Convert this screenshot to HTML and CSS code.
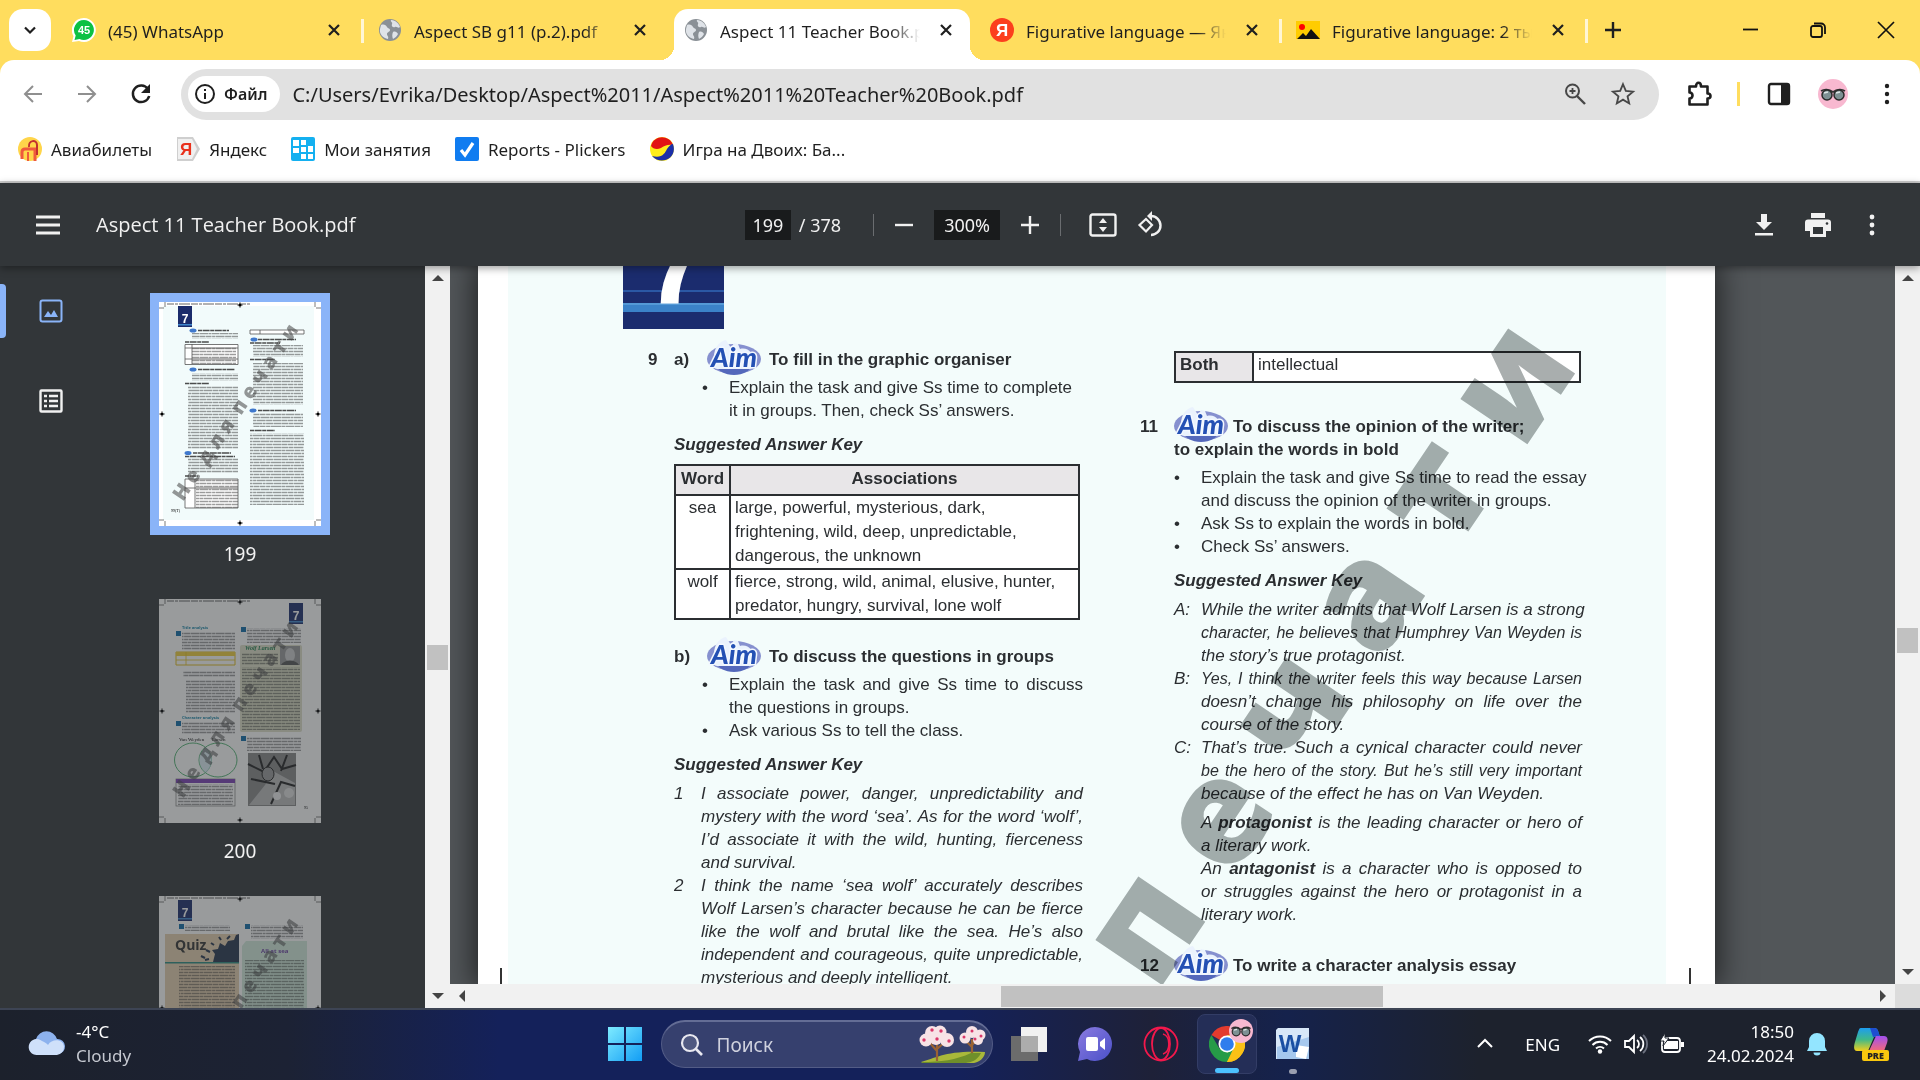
FILE: index.html
```html
<!DOCTYPE html>
<html lang="ru">
<head>
    <meta charset="UTF-8">
    <meta name="viewport" content="width=device-width, initial-scale=1.0">
    <title>Aspect 11 Teacher Book.pdf</title>
    <link rel="stylesheet" href="styles.css">
</head>
<body>
    <!-- Shared shapes -->
    <svg class="defs" width="0" height="0" aria-hidden="true">
        <defs>
            <symbol id="close" viewBox="0 0 24 24"><path d="M7 7l10 10M17 7L7 17" stroke="#1f1f1f" stroke-width="2.2"/></symbol>
            <symbol id="globe" viewBox="0 0 24 24">
                <circle cx="12" cy="12" r="11" fill="#8a9096"/>
                <path d="M3 7c3-1 5 0 6 2s3 1 3 3-3 2-3 4 2 2 1 5c-5-1-9-5-8-10zM13 2c5 0 8 4 9 7-2 2-3-1-5 0s-4-1-3-3-2-2-1-4zM15 14c2-1 4 0 5 2-1 2-3 4-5 5-1-2-1-5 0-7z" fill="#dfe3e8"/>
            </symbol>
            <symbol id="aim" viewBox="0 0 54 36">
                <ellipse cx="27" cy="20" rx="27" ry="15" fill="#8690cf"/>
                <ellipse cx="27" cy="26" rx="17" ry="10" fill="#5468bb"/>
                <path d="M7 18c0-10 6-16 12-17l5 8 3-5 4 1 2 5c8-2 14 4 14 14 0 4-2 6-6 6H10c-5-1-6-6-3-12z" fill="#eaf2fd"/>
                <text x="27" y="28" text-anchor="middle" font-family="Lato, sans-serif" font-weight="900" font-size="27" font-style="italic" fill="#2450b4" stroke="#f3f8ff" stroke-width="3" stroke-linejoin="round" paint-order="stroke">Aim</text>
            </symbol>
            <pattern id="lines" width="41" height="12" patternUnits="userSpaceOnUse">
                <path d="M0 1.5h6.500m.5 0h4.500m.5 0h9m.6 0h3m.5 0h7m.5 0h8M0 4.5h3.500m.5 0h8m.5 0h5.500m.5 0h6m.6 0h4m.5 0h11M0 7.5h8m.5 0h3m.5 0h7m.5 0h9m.5 0h3m.5 0h8M0 10.5h5m.5 0h6m.6 0h3m.5 0h9m.5 0h6m.5 0h9" stroke="#222" stroke-opacity=".45" stroke-width="1.300"/>
            </pattern>
            <symbol id="marks" viewBox="0 0 162 224">
                <path d="M8 2h84" stroke="#222" stroke-width="1" stroke-dasharray="7 1 3 1 11 1" opacity=".7"/>
                <path d="M6 0v5M0 6h5M156 0v5M157 6h5M6 219v5M0 218h5M156 219v5M157 218h5M81 0v6M78 3h6M3 109v6M0 112h6M159 109v6M156 112h6M81 218v6M78 221h6" stroke="#444" stroke-width=".7"/>
                <circle cx="81" cy="3" r="1.6"/><circle cx="3" cy="112" r="1.6"/><circle cx="159" cy="112" r="1.6"/><circle cx="81" cy="221" r="1.6"/>
            </symbol>
            <symbol id="stamp" viewBox="0 0 162 224">
                <text transform="translate(24 200) rotate(-56)" font-family="Open Sans, sans-serif" font-weight="800" font-size="20" fill="#444" fill-opacity=".55" xml:space="preserve">Н е  д л я  п е ч а т и</text>
            </symbol>
            <symbol id="seven" viewBox="0 0 14 21">
                <rect width="14" height="21" fill="#1a2b6b"/><rect y="18" width="14" height="1.500" fill="#3f86cc"/>
                <text x="7" y="17" text-anchor="middle" font-family="Liberation Sans, sans-serif" font-weight="700" font-size="12" fill="#fff">7</text>
            </symbol>
            <symbol id="shades" viewBox="0 0 30 30">
                <circle cx="15" cy="15" r="15" fill="#f8b8d0"/>
                <path d="M3 12c3-2 8-2 12 1 4-3 9-3 12-1" fill="none" stroke="#333" stroke-width="1.6"/>
                <ellipse cx="9" cy="16" rx="5" ry="5" fill="#7d9093" stroke="#2a2a2a" stroke-width="1.5"/>
                <ellipse cx="21" cy="16" rx="5" ry="5" fill="#7d9093" stroke="#2a2a2a" stroke-width="1.5"/>
                <path d="M6 14l4-1M18 14l4-1" stroke="#dde6e6" stroke-width="1.5"/>
            </symbol>
        </defs>
    </svg>

    <header class="tabstrip">
        <button class="tab-search" aria-label="Поиск вкладок"><svg width="20" height="20" viewBox="0 0 20 20"><path d="M5 7.5l5 5 5-5" fill="none" stroke="#1f1f1f" stroke-width="2.2"/></svg></button>
        <div class="tab with-sep">
            <svg class="fav" viewBox="0 0 24 24"><path d="M12 0a12 12 0 1 1-5 23L0 24l1.500-6A12 12 0 0 1 12 0z" fill="#fff"/><path d="M12 2a10 10 0 1 1-4.500 19L2.500 22l1.200-4.500A10 10 0 0 1 12 2z" fill="#0cc143"/><text x="12" y="16" text-anchor="middle" font-family="Liberation Sans, sans-serif" font-weight="700" font-size="11" fill="#fff">45</text></svg>
            <button class="tab-name">(45) WhatsApp</button>
            <button class="tab-close" aria-label="Закрыть"><svg width="24" height="24"><use href="#close"/></svg></button>
        </div>
        <div class="tab">
            <svg class="fav"><use href="#globe"/></svg>
            <button class="tab-name">Aspect SB g11 (p.2).pdf</button>
            <button class="tab-close" aria-label="Закрыть"><svg width="24" height="24"><use href="#close"/></svg></button>
        </div>
        <div class="tab active">
            <svg class="fav"><use href="#globe"/></svg>
            <button class="tab-name">Aspect 11 Teacher Book.pdf</button>
            <button class="tab-close" aria-label="Закрыть"><svg width="24" height="24"><use href="#close"/></svg></button>
        </div>
        <div class="tab with-sep">
            <svg class="fav" viewBox="0 0 24 24"><circle cx="12" cy="12" r="12" fill="#fc3f1d"/><text x="12" y="18" text-anchor="middle" font-family="Liberation Sans, sans-serif" font-weight="700" font-size="17" fill="#fff">Я</text></svg>
            <button class="tab-name">Figurative language — Яндекс</button>
            <button class="tab-close" aria-label="Закрыть"><svg width="24" height="24"><use href="#close"/></svg></button>
        </div>
        <div class="tab with-sep">
            <svg class="fav" viewBox="0 0 24 24"><path d="M0 3h24v18H0z" fill="#fc0"/><circle cx="6" cy="9" r="3" fill="#f00"/><path d="M1 21l6-6 3 3 5-7 9 10z" fill="#111"/></svg>
            <button class="tab-name">Figurative language: 2 тыс</button>
            <button class="tab-close" aria-label="Закрыть"><svg width="24" height="24"><use href="#close"/></svg></button>
        </div>
        <button class="new-tab" aria-label="Новая вкладка"><svg width="20" height="20" viewBox="0 0 20 20"><path d="M10 2v16M2 10h16" stroke="#1f1f1f" stroke-width="2.400"/></svg></button>
        <div class="window-controls">
            <button aria-label="Свернуть"><svg width="20" height="20" viewBox="0 0 20 20"><path d="M3 9.500h15" stroke="#111" stroke-width="1.800"/></svg></button>
            <button aria-label="Восстановить"><svg width="20" height="20" viewBox="0 0 20 20"><rect x="3" y="6" width="11" height="11" rx="2" fill="none" stroke="#111" stroke-width="1.800"/><path d="M6 3.500h7a4 4 0 0 1 4 4V14" fill="none" stroke="#111" stroke-width="1.800"/></svg></button>
            <button aria-label="Закрыть окно"><svg width="20" height="20" viewBox="0 0 20 20"><path d="M2 2l16 16M18 2L2 18" stroke="#111" stroke-width="1.700"/></svg></button>
        </div>
    </header>

    <nav class="browser-bar">
        <div class="toolbar">
            <button class="icon-btn" aria-label="Назад"><svg width="24" height="24" viewBox="0 0 24 24"><path d="M21 12H4M12 4l-8 8 8 8" fill="none" stroke="#8f8f8f" stroke-width="2"/></svg></button>
            <button class="icon-btn" aria-label="Вперёд"><svg width="24" height="24" viewBox="0 0 24 24"><path d="M3 12h17M12 4l8 8-8 8" fill="none" stroke="#8f8f8f" stroke-width="2"/></svg></button>
            <button class="icon-btn" aria-label="Обновить"><svg width="24" height="24" viewBox="0 0 24 24"><path d="M19 7a8.300 8.300 0 1 0 1.200 7" fill="none" stroke="#1f1f1f" stroke-width="2.500"/><path d="M21 2v9h-9z" fill="#1f1f1f"/></svg></button>
            <div class="omnibox">
                <button class="file-chip"><svg width="22" height="22" viewBox="0 0 22 22"><circle cx="11" cy="11" r="9" fill="none" stroke="#1f1f1f" stroke-width="2"/><path d="M11 10v6M11 6v2" stroke="#1f1f1f" stroke-width="2"/></svg>Файл</button>
                <input class="url" type="text" aria-label="Адрес" value="C:/Users/Evrika/Desktop/Aspect%2011/Aspect%2011%20Teacher%20Book.pdf">
                <button class="icon-btn" aria-label="Масштаб"><svg width="24" height="24" viewBox="0 0 24 24"><circle cx="9.500" cy="9" r="6.500" fill="none" stroke="#474747" stroke-width="2"/><path d="M14 14l8 8" stroke="#474747" stroke-width="2.400"/><path d="M9.500 6v6M6.500 9h6" stroke="#474747" stroke-width="1.800"/></svg></button>
                <button class="icon-btn" aria-label="В закладки"><svg width="26" height="26" viewBox="0 0 24 24"><path d="M12 3l2.600 6.200 6.700.6-5.100 4.400 1.500 6.500L12 17.200l-5.700 3.500 1.500-6.500-5.100-4.400 6.700-.6z" fill="none" stroke="#474747" stroke-width="1.700"/></svg></button>
            </div>
            <button class="icon-btn" aria-label="Расширения"><svg width="28" height="28" viewBox="0 0 28 28"><path d="M4.500 6.500h6.500c0-5 5-5 5 0h6.500v7c4 0 4 5 0 5v6h-18v-6c4 0 4-6 0-6z" fill="none" stroke="#1f1f1f" stroke-width="2.600" stroke-linejoin="round"/></svg></button>
            <span class="bar-sep"></span>
            <button class="icon-btn" aria-label="Боковая панель"><svg width="24" height="24" viewBox="0 0 24 24"><rect x="2" y="2" width="20" height="20" rx="2" fill="none" stroke="#1f1f1f" stroke-width="2.400"/><path d="M14 2h8v20h-8z" fill="#1f1f1f"/></svg></button>
            <button class="icon-btn" aria-label="Профиль"><svg width="30" height="30"><use href="#shades"/></svg></button>
            <button class="icon-btn" aria-label="Меню"><svg width="24" height="24" viewBox="0 0 24 24"><g fill="#1f1f1f"><circle cx="12" cy="4" r="2.200"/><circle cx="12" cy="12" r="2.200"/><circle cx="12" cy="20" r="2.200"/></g></svg></button>
        </div>
        <div class="bookmarks">
            <a href="#"><svg class="fav" viewBox="0 0 24 24"><circle cx="12" cy="12" r="12" fill="#ffd54a"/><path d="M4 22v-7c0-2 1-3 3-3h10v12" fill="none" stroke="#ef5a3c" stroke-width="3"/><path d="M11 10c-1-7 8-8 8-2v10" fill="none" stroke="#c22f2f" stroke-width="2"/><path d="M10 15v9" stroke="#ef5a3c" stroke-width="2"/></svg>Авиабилеты</a>
            <a href="#"><svg class="fav" viewBox="0 0 24 24"><path d="M1 0h16l7 12-7 12H1z" fill="#cfcfcf"/><path d="M2 2h14l5 10-5 10H2z" fill="#f0f0f0"/><text x="10" y="18" text-anchor="middle" font-family="Liberation Sans, sans-serif" font-weight="700" font-size="17" fill="#e9311c">Я</text></svg>Яндекс</a>
            <a href="#"><svg class="fav" viewBox="0 0 24 24"><rect width="24" height="24" rx="2" fill="#14b0f0"/><path d="M2 3h6v6H2zM10 3h5v5h-5zM2 11h6v5H2zM10 10h5v5h-5zM17 9h5v6h-5zM10 17h5v5h-5zM17 17h5v5h-5z" fill="#fff"/></svg>Мои занятия</a>
            <a href="#"><svg class="fav" viewBox="0 0 24 24"><rect width="24" height="24" rx="2" fill="#107cf0"/><path d="M6 13l4 5 8-12" fill="none" stroke="#fff" stroke-width="3.200"/></svg>Reports - Plickers</a>
            <a href="#"><svg class="fav" viewBox="0 0 24 24"><circle cx="12" cy="12" r="12" fill="#ffee1c"/><path d="M1 9C4-3 20-2 23 8c-5-1-9 1-12 3-4 2-8 1-10-2z" fill="#e21414"/><path d="M23 7c5 14-12 22-21 12 10 3 13-3 15-7 2-3 4-5 6-5z" fill="#1b2fa8"/></svg>Игра на Двоих: Ба...</a>
        </div>
    </nav>

    <section class="pdf-toolbar">
        <div class="pdf-left">
            <button class="icon-btn" aria-label="Меню"><svg width="24" height="24" viewBox="0 0 24 24"><path d="M0 4h24M0 12h24M0 20h24" stroke="#f1f1f1" stroke-width="2.800"/></svg></button>
            <h1>Aspect 11 Teacher Book.pdf</h1>
        </div>
        <div class="pdf-center">
            <input class="page-no" type="text" aria-label="Номер страницы" value="199">
            <span class="page-count">/ 378</span>
            <span class="pdf-sep"></span>
            <button class="icon-btn" aria-label="Уменьшить"><svg width="24" height="24" viewBox="0 0 24 24"><path d="M3 12h18" stroke="#f1f1f1" stroke-width="2.400"/></svg></button>
            <input class="zoom-level" type="text" aria-label="Масштаб" value="300%">
            <button class="icon-btn" aria-label="Увеличить"><svg width="24" height="24" viewBox="0 0 24 24"><path d="M3 12h18M12 3v18" stroke="#f1f1f1" stroke-width="2.400"/></svg></button>
            <span class="pdf-sep second"></span>
            <button class="icon-btn" aria-label="По размеру страницы"><svg width="28" height="24" viewBox="0 0 28 24"><rect x="1.500" y="1.500" width="25" height="21" rx="2" fill="none" stroke="#f1f1f1" stroke-width="2.400"/><path d="M14 5l4 5h-8zM14 19l4-5h-8z" fill="#f1f1f1"/></svg></button>
            <button class="icon-btn rotate" aria-label="Повернуть"><svg width="28" height="28" viewBox="0 0 28 28"><path d="M9 8l6 6-6 6.500-6.500-6.500z" fill="none" stroke="#f1f1f1" stroke-width="2.200"/><path d="M14 5a9.500 9.500 0 1 1 0 19" fill="none" stroke="#f1f1f1" stroke-width="2.400"/><path d="M15 0v10l-5-5z" fill="#f1f1f1"/></svg></button>
        </div>
        <div class="pdf-right">
            <button class="icon-btn" aria-label="Скачать"><svg width="24" height="24" viewBox="0 0 24 24"><path d="M9 1h6v8h5l-8 8-8-8h5zM3 20h18v2.600H3z" fill="#f1f1f1"/></svg></button>
            <button class="icon-btn" aria-label="Печать"><svg width="26" height="24" viewBox="0 0 26 24"><path d="M6 0h14v5H6zM3 6.500h20a3 3 0 0 1 3 3V18h-5v6H5v-6H0V9.500a3 3 0 0 1 3-3z" fill="#f1f1f1"/><path d="M8 14h10v7H8z" fill="#323639"/><circle cx="22" cy="10.500" r="1.300" fill="#323639"/></svg></button>
            <button class="icon-btn" aria-label="Ещё"><svg width="24" height="24" viewBox="0 0 24 24"><g fill="#f1f1f1"><circle cx="12" cy="4" r="2.400"/><circle cx="12" cy="12" r="2.400"/><circle cx="12" cy="20" r="2.400"/></g></svg></button>
        </div>
    </section>

    <main class="viewer">
        <aside class="sidebar">
            <div class="side-modes">
                <button class="mode selected" aria-label="Миниатюры"><svg width="24" height="24" viewBox="0 0 24 24"><rect x="1.500" y="1.500" width="21" height="21" rx="2" fill="none" stroke="#8ab4f8" stroke-width="2"/><path d="M5 18l4-6 3 4 3-5 4 7z" fill="#8ab4f8"/></svg></button>
                <button class="mode" aria-label="Содержание"><svg width="24" height="24" viewBox="0 0 24 24"><rect x="1.500" y="1.500" width="21" height="21" rx="1" fill="none" stroke="#f1f1f1" stroke-width="2.400"/><path d="M5 7h3M5 12h3M5 17h3M10 7h9M10 12h9M10 17h9" stroke="#f1f1f1" stroke-width="2.400"/></svg></button>
            </div>
            <div class="thumbs">
                <figure class="thumb current">
                    <svg viewBox="0 0 162 224" role="img" aria-label="Страница 199">
                        <rect width="162" height="224" fill="#fff"/><rect x="4" y="4" width="151" height="214" fill="#f2fbfb"/>
                        <use href="#marks" width="162" height="224"/><use href="#seven" x="19" y="4" width="14" height="21"/>
                        <path d="M26 42.500h53v20H26zM26 177h53v29H26zM91 28h54v4H91z" fill="#fff"/>
                        <g fill="url(#lines)">
                            <rect x="33" y="31" width="46" height="6"/><rect x="33" y="45" width="44" height="17"/>
                            <rect x="33" y="71" width="46" height="8"/><rect x="29" y="84" width="50" height="63"/>
                            <rect x="29" y="156" width="50" height="15"/><rect x="37" y="177" width="42" height="29"/>
                            <rect x="94" y="43" width="50" height="12"/><rect x="94" y="61" width="50" height="42"/>
                            <rect x="94" y="111" width="50" height="14"/><rect x="91" y="131" width="54" height="72"/>
                        </g>
                        <path d="M26 42.500h53v20H26zM26 177h53v29H26zM91 28h54v4H91zM26 46h53M26 57h53M33 42v20M36 177v29M26 186h53M101 28v4" fill="none" stroke="#555" stroke-width=".8"/>
                        <g fill="#3f78cc"><ellipse cx="34" cy="28.500" rx="3.500" ry="2"/><ellipse cx="34" cy="67.500" rx="3.500" ry="2"/><ellipse cx="29" cy="151" rx="3.500" ry="2"/><ellipse cx="95" cy="37.500" rx="3.500" ry="2"/><ellipse cx="94" cy="108.500" rx="3.500" ry="2"/></g>
                        <path d="M39 28.500h31M39 67.500h37M34 151h38M26 154.500h50M99 37.500h38M91 41h30M99 108.500h38M26 40h24M26 81.500h24M91 57.500h25M91 128.500h25M26 174h13" stroke="#222" stroke-width="1.400" stroke-opacity=".8" stroke-dasharray="4 .6 7 .6"/>
                        <text x="12" y="210" font-family="Liberation Serif, serif" font-size="4">99(T)</text>
                        <use href="#stamp" width="162" height="224"/>
                    </svg>
                    <figcaption>199</figcaption>
                </figure>
                <figure class="thumb">
                    <svg viewBox="0 0 162 224" role="img" aria-label="Страница 200">
                        <rect width="162" height="224" fill="#fff"/>
                        <use href="#marks" width="162" height="224"/><use href="#seven" x="130" y="4" width="14" height="21"/>
                        <text x="23" y="30" font-family="Open Sans, sans-serif" font-size="4" font-weight="700" fill="#1a86a8">Title analysis</text>
                        <text x="23" y="120" font-family="Open Sans, sans-serif" font-size="4" font-weight="700" fill="#1a86a8">Character analysis</text>
                        <g fill="#0d6aa8"><path d="M17 32h5v5h-5zM82 28h5v5h-5zM17 122h5v5h-5zM82 137h5v5h-5z"/></g>
                        <g fill="url(#lines)"><rect x="23" y="33" width="53" height="18"/><rect x="24" y="72" width="52" height="6"/><rect x="27" y="81" width="49" height="33"/><rect x="23" y="123" width="53" height="12"/><rect x="88" y="29" width="54" height="15"/><rect x="88" y="138" width="54" height="14"/></g>
                        <path d="M17 53h59v13H17z" fill="#fff" stroke="#e0bd1e"/><path d="M17 53h59v4H17z" fill="#f2cf3c"/><path d="M17 61h59M27 53v13" stroke="#e0bd1e" stroke-width=".8"/>
                        <rect x="81" y="46" width="62" height="87" rx="2" fill="#dfe0c8"/>
                        <rect x="83" y="54" width="36" height="12" fill="url(#lines)"/><rect x="83" y="68" width="58" height="63" fill="url(#lines)"/>
                        <text x="86" y="51" font-family="Liberation Serif, serif" font-size="6" font-style="italic" font-weight="700" fill="#1d7a4d">Wolf Larsen</text>
                        <rect x="121" y="47" width="20" height="19" fill="#999"/><ellipse cx="131" cy="56" rx="5" ry="7" fill="#ccc"/><path d="M122 66c3-6 15-6 18 0z" fill="#555"/>
                        <text x="20" y="142" font-family="Liberation Serif, serif" font-size="5">Van Weyden</text><text x="53" y="142" font-family="Liberation Serif, serif" font-size="5">Larsen</text>
                        <g fill="none" stroke="#28a050" stroke-width=".8"><ellipse cx="34" cy="161" rx="18.500" ry="17"/><ellipse cx="59" cy="161" rx="19" ry="17"/></g>
                        <path d="M47 148c8 8 8 18 0 26-9-8-9-18 0-26z" fill="#cfe6f0" fill-opacity=".7"/>
                        <rect x="17" y="180" width="59" height="27" fill="#fff" stroke="#777" stroke-width=".7"/><rect x="19" y="185" width="55" height="21" fill="url(#lines)"/><rect x="17" y="180" width="59" height="4" fill="#7a3fb5"/>
                        <rect x="89" y="154" width="48" height="53" fill="#888"/><path d="M90 206l16-20 8-14 22 12v22z" fill="#bbb"/><path d="M89 165l16 8 10-15 8 12 14-4M92 180l24 5M100 156l4 14M112 205l10-22 14 4M128 156l-6 16" stroke="#222" stroke-width="2" fill="none"/><ellipse cx="109" cy="175" rx="6" ry="7" fill="#999" stroke="#222"/><circle cx="118" cy="197" r="4" fill="#eee"/><circle cx="130" cy="194" r="5" fill="#ddd"/>
                        <text x="145" y="210" font-family="Liberation Serif, serif" font-size="4">95</text>
                        <use href="#stamp" width="162" height="224"/>
                    </svg>
                    <figcaption>200</figcaption>
                </figure>
                <figure class="thumb">
                    <svg viewBox="0 0 162 224" role="img" aria-label="Страница 201">
                        <rect width="162" height="224" fill="#fff"/>
                        <use href="#marks" width="162" height="224"/><use href="#seven" x="19" y="4" width="14" height="21"/>
                        <path d="M20 28h5v5h-5zM86 28h5v5h-5z" fill="#0d6aa8"/>
                        <g fill="url(#lines)"><rect x="26" y="29" width="45" height="6"/><rect x="92" y="29" width="52" height="14"/></g>
                        <rect x="6" y="38" width="74" height="180" fill="#e6cfb0"/><rect x="6" y="66" width="74" height="1.500" fill="#2a8a80"/>
                        <path d="M54 66l2-8-3-4 6-1 2-6 5 3 3-5 6-1 2-5 3-1v28z" fill="#26354d"/><path d="M42 60l4 2M47 54l4 2M52 47l3 2M60 41l2 3M68 43l3-3M46 64l4-1" stroke="#26354d" stroke-width="2"/>
                        <text x="16" y="54" font-family="Open Sans, sans-serif" font-size="14" font-weight="700" fill="#333">Quiz</text>
                        <rect x="20" y="70" width="56" height="60" fill="url(#lines)"/>
                        <path d="M83 50l4-5h61v170H83z" fill="#d3ecdd"/>
                        <text x="102" y="57" font-family="Open Sans, sans-serif" font-size="6" font-weight="700" fill="#6a3fa0">All at sea</text>
                        <rect x="86" y="64" width="59" height="80" fill="url(#lines)"/>
                        <use href="#stamp" width="162" height="224"/>
                    </svg>
                </figure>
            </div>
            <div class="vscroll">
                <i class="arrow up"></i><i class="handle side"></i><i class="arrow down"></i>
            </div>
        </aside>

        <section class="document">
            <div class="canvas">
                <article class="page">
                    <div class="sheet">
                        <div class="column">
                            <svg class="unit" width="101" height="63" viewBox="0 0 101 63"><rect width="101" height="63" fill="#1b2c6e"/><path d="M0 25h101" stroke="#2b58a4" stroke-width="2"/><rect y="37" width="101" height="9" fill="#3b82c8"/><path d="M0 38h101" stroke="#6fb0e4"/><text x="20" y="38" font-family="Liberation Sans, sans-serif" font-weight="700" font-size="124" fill="#fff">7</text></svg>

                            <h2 class="task"><span class="num">9</span><span class="sub">a)</span><svg class="aim"><use href="#aim"/></svg><span>To fill in the graphic organiser</span></h2>
                            <ul class="points inset">
                                <li>Explain the task and give Ss time to complete<br>it in groups. Then, check Ss’ answers.</li>
                            </ul>
                            <h3>Suggested Answer Key</h3>
                            <table class="words">
                                <tr><th>Word</th><th>Associations</th></tr>
                                <tr><td>sea</td><td>large, powerful, mysterious, dark,<br>frightening, wild, deep, unpredictable,<br>dangerous, the unknown</td></tr>
                                <tr><td>wolf</td><td>fierce, strong, wild, animal, elusive, hunter,<br>predator, hungry, survival, lone wolf</td></tr>
                            </table>

                            <h2 class="task later"><span class="num"></span><span class="sub">b)</span><svg class="aim"><use href="#aim"/></svg><span>To discuss the questions in groups</span></h2>
                            <ul class="points inset">
                                <li><span class="ln">Explain the task and give Ss time to discuss</span>the questions in groups.</li>
                                <li>Ask various Ss to tell the class.</li>
                            </ul>
                            <h3>Suggested Answer Key</h3>
                            <dl class="answers">
                                <dt>1</dt>
                                <dd><span class="ln">I associate power, danger, unpredictability and</span><span class="ln">mystery with the word ‘sea’. As for the word ‘wolf’,</span><span class="ln">I’d associate it with the wild, hunting, fierceness</span>and survival.</dd>
                                <dt>2</dt>
                                <dd><span class="ln">I think the name ‘sea wolf’ accurately describes</span><span class="ln">Wolf Larsen’s character because he can be fierce</span><span class="ln">like the wolf and brutal like the sea. He’s also</span><span class="ln">independent and courageous, quite unpredictable,</span>mysterious and deeply intelligent.</dd>
                            </dl>
                        </div>

                        <div class="column right">
                            <table class="both">
                                <tr><th>Both</th><td>intellectual</td></tr>
                            </table>
                            <h2 class="task wide"><span class="num">11</span><svg class="aim"><use href="#aim"/></svg><span>To discuss the opinion of the writer;</span></h2>
                            <p class="task-more">to explain the words in bold</p>
                            <ul class="points">
                                <li><span class="ln">Explain the task and give Ss time to read the essay</span>and discuss the opinion of the writer in groups.</li>
                                <li>Ask Ss to explain the words in bold.</li>
                                <li>Check Ss’ answers.</li>
                            </ul>
                            <h3>Suggested Answer Key</h3>
                            <dl class="answers">
                                <dt>A:</dt>
                                <dd><span class="ln">While the writer admits that Wolf Larsen is a strong</span><span class="ln tight">character, he believes that Humphrey Van Weyden is</span>the story’s true protagonist.</dd>
                                <dt>B:</dt>
                                <dd><span class="ln tight">Yes, I think the writer feels this way because Larsen</span><span class="ln">doesn’t change his philosophy on life over the</span>course of the story.</dd>
                                <dt>C:</dt>
                                <dd><span class="ln">That’s true. Such a cynical character could never</span><span class="ln tight">be the hero of the story. But he’s still very important</span>because of the effect he has on Van Weyden.</dd>
                                <dd class="note"><span class="ln">A <b>protagonist</b> is the leading character or hero of</span>a literary work.</dd>
                                <dd><span class="ln">An <b>antagonist</b> is a character who is opposed to</span><span class="ln">or struggles against the hero or protagonist in a</span>literary work.</dd>
                            </dl>
                            <h2 class="task wide last"><span class="num">12</span><svg class="aim"><use href="#aim"/></svg><span>To write a character analysis essay</span></h2>
                        </div>
                    </div>
                    <span class="watermark">п е ч а т и</span>
                    <i class="crop crop-left"></i><i class="crop crop-right"></i>
                </article>
            </div>
            <div class="vscroll"><i class="arrow up"></i><i class="handle main"></i><i class="arrow down"></i></div>
            <div class="hscroll"><i class="arrow left"></i><i class="handle"></i><i class="arrow right"></i></div>
            <div class="corner"></div>
        </section>
    </main>

    <footer class="taskbar">
        <button class="weather">
            <svg width="38" height="28" viewBox="0 0 38 28"><path d="M9 24a8 8 0 0 1-1-15A11 11 0 0 1 29 9a7 7 0 0 1 1 15z" fill="#8db2ee"/><path d="M9 25a8 8 0 1 1 5-14c3 1 5 3 6 4 4-7 16-6 16 2a8 8 0 0 1-7 8z" fill="#cfe0fa"/></svg>
            <span>-4°C<small>Cloudy</small></span>
        </button>
        <div class="apps">
            <button class="app start" aria-label="Пуск"><svg width="36" height="36" viewBox="0 0 36 36"><defs><linearGradient id="win" x1="0" y1="0" x2="1" y2="1"><stop offset="0" stop-color="#7eebff"/><stop offset="1" stop-color="#129df5"/></linearGradient></defs><path d="M1 1h16v16H1zM19 1h16v16H19zM1 19h16v16H1zM19 19h16v16H19z" fill="url(#win)"/></svg></button>
            <label class="search">
                <svg width="24" height="24" viewBox="0 0 24 24"><circle cx="11" cy="10" r="8" fill="#ffffff22" stroke="#e8e8f0" stroke-width="2.200"/><path d="M17 16l6 6" stroke="#e8e8f0" stroke-width="2.600"/></svg>
                <input type="text" placeholder="Поиск" aria-label="Поиск">
                <svg width="70" height="40" viewBox="0 0 70 40"><path d="M3 37c15-4 25-12 64-10 0 6-6 10-11 11H5z" fill="#a9b83a"/><path d="M3 37c20 0 35-2 50-9l10 0c-4 8-10 9-15 10H5z" fill="#6f8f2a"/><path d="M19 36V17M19 26l-8-9M19 24l9-8M54 28V14M54 22l-6-6M54 20l6-6" stroke="#9a6233" stroke-width="2.200" fill="none"/><g fill="#f7e3e6"><circle cx="8" cy="15" r="6.500"/><circle cx="14" cy="8" r="7"/><circle cx="22" cy="7" r="6.500"/><circle cx="29" cy="15" r="7"/><circle cx="18" cy="14" r="6"/><circle cx="47" cy="13" r="5.500"/><circle cx="54" cy="7" r="6"/><circle cx="62" cy="10" r="5.500"/><circle cx="60" cy="15" r="5"/></g><g fill="#d9386a"><circle cx="6" cy="15" r="1.700"/><circle cx="14" cy="5" r="1.700"/><circle cx="23" cy="6" r="1.700"/><circle cx="31" cy="16" r="1.700"/><circle cx="19" cy="14" r="1.700"/><circle cx="46" cy="12" r="1.500"/><circle cx="54" cy="6" r="1.500"/><circle cx="63" cy="11" r="1.500"/><circle cx="57" cy="14" r="1.500"/></g></svg>
            </label>
            <button class="app" aria-label="Представление задач"><svg width="36" height="36" viewBox="0 0 36 36"><path d="M10 1h26v25H10z" fill="#f1f1f1"/><path d="M0 10h27v25H0z" fill="#6c6c6c"/><path d="M10 10h17v16H10z" fill="#acacac"/></svg></button>
            <button class="app" aria-label="Чат"><svg width="36" height="36" viewBox="0 0 36 36"><defs><linearGradient id="chat" x1="0" y1="0" x2="1" y2="1"><stop offset="0" stop-color="#8b7be0"/><stop offset="1" stop-color="#4a50c8"/></linearGradient></defs><path d="M18 1a17 17 0 1 1-8 32l-9 2 2-9A17 17 0 0 1 18 1z" fill="url(#chat)"/><rect x="9" y="11" width="12" height="14" rx="2" fill="#fff"/><path d="M23 16l5-4v12l-5-4z" fill="#fff"/></svg></button>
            <button class="app" aria-label="Opera"><svg width="36" height="36" viewBox="0 0 36 36"><g fill="none" stroke="#f3184c" stroke-width="1.800"><circle cx="18" cy="18" r="16.500"/><ellipse cx="18" cy="18" rx="9" ry="16"/><path d="M20 8c8 2 8 18 0 20"/></g></svg></button>
            <button class="app running" aria-label="Chrome">
                <svg width="36" height="36" viewBox="0 0 36 36"><path d="M18 18L2.400 9A18 18 0 0 1 33.600 9z" fill="#e33b2e"/><path d="M18 18l15.600-9A18 18 0 0 1 18 36z" fill="#fbc116"/><path d="M18 36A18 18 0 0 1 2.400 9l8 13.500 8 4 6-4z" fill="#269b47"/><path d="M18 9h15.600A18 18 0 0 1 18 36l8-13.500z" fill="#fbc116"/><circle cx="18" cy="18" r="8.500" fill="#fff"/><circle cx="18" cy="18" r="6.800" fill="#2f7ded"/></svg>
                <svg class="badge" width="24" height="24"><use href="#shades"/></svg>
            </button>
            <button class="app opened" aria-label="Word"><svg width="34" height="34" viewBox="0 0 34 34"><path d="M2 1h31v31H0V3z" fill="#d7e7f8"/><path d="M1 20l32-10v22H1z" fill="#a6c8ee"/><path d="M20 18l13 2-3 12-10-2z" fill="#fff"/><text x="14" y="25" text-anchor="middle" font-family="Liberation Sans, sans-serif" font-weight="700" font-size="24" fill="#1a4fa3">W</text></svg></button>
        </div>
        <div class="tray">
            <button aria-label="Скрытые значки"><svg width="20" height="20" viewBox="0 0 20 20"><path d="M3 13l7-7 7 7" fill="none" stroke="#fff" stroke-width="2"/></svg></button>
            <button class="lang">ENG</button>
            <button class="status" aria-label="Сеть, звук, батарея">
                <svg width="26" height="22" viewBox="0 0 26 22"><g fill="none" stroke="#fff" stroke-width="2"><path d="M2 8a15.500 15.500 0 0 1 22 0M5.500 12a10.500 10.500 0 0 1 15 0M9 15.500a6 6 0 0 1 8 0"/></g><circle cx="13" cy="18.500" r="2.200" fill="#fff"/></svg>
                <svg width="26" height="22" viewBox="0 0 26 22"><path d="M2 8h4l5-5v16l-5-5H2zM14 7a5 5 0 0 1 0 8M17 4a9 9 0 0 1 0 14" fill="none" stroke="#fff" stroke-width="1.800"/><path d="M20 2a12 12 0 0 1 0 18" fill="none" stroke="#6d7280" stroke-width="1.800"/></svg>
                <svg width="26" height="22" viewBox="0 0 26 22"><rect x="3" y="5" width="18" height="14" rx="3" fill="none" stroke="#fff" stroke-width="1.800"/><path d="M8 8h11v8H5v-5z" fill="#fff"/><path d="M22 9h3v5h-3z" fill="#fff"/><path d="M6 0L1 8h4l-1 5 6-8H6z" fill="#fff" stroke="#1d222d"/></svg>
            </button>
            <button class="clock">18:50<br>24.02.2024</button>
            <button aria-label="Уведомления"><svg width="22" height="24" viewBox="0 0 22 24"><path d="M11 1a8 8 0 0 1 8 8v6l2 4H1l2-4V9a8 8 0 0 1 8-8zM7.500 20.500h7a3.500 3 0 0 1-7 0z" fill="#93e5ff"/></svg></button>
            <button class="copilot" aria-label="Copilot"><svg width="36" height="36" viewBox="0 0 36 36"><defs><linearGradient id="cpA" x1="0" y1="0" x2="0" y2="1"><stop offset="0" stop-color="#1d9df0"/><stop offset=".5" stop-color="#3fb98a"/><stop offset="1" stop-color="#f5cf1a"/></linearGradient><linearGradient id="cpB" x1="0" y1="0" x2="0" y2="1"><stop offset="0" stop-color="#a050f0"/><stop offset="1" stop-color="#f56a78"/></linearGradient></defs><path d="M8 2h13c5 0 4 5 6 8l-6 1-6 14H4c-4 0-3-6-2-9l3-10c1-2 1-4 3-4z" fill="url(#cpA)"/><path d="M17 2h4c5 0 4 5 6 8l-7 1z" fill="#1e4ed0"/><path d="M23 10h8c4 0 4 4 3 7l-3 8H16z" fill="url(#cpB)"/><rect x="9" y="24" width="27" height="11" rx="2" fill="#f9c80e"/><text x="22.500" y="33" text-anchor="middle" font-family="Open Sans, sans-serif" font-weight="800" font-size="9" fill="#222">PRE</text></svg></button>
        </div>
    </footer>
</body>
</html>
```
FILE: styles.css
```css
* {
    box-sizing: border-box;
}

body {
    margin: 0;
    height: 100vh;
    display: flex;
    flex-direction: column;
    overflow: hidden;
    font-family: 'Noto Sans', 'Open Sans', sans-serif;
    font-size: 17px;
    color: #1f1f1f;
    background-color: #FFDD5E;
}

button,
input {
    font: inherit;
    color: inherit;
    border: none;
    background: none;
    padding: 0;
    margin: 0;
    outline: none;
}

button {
    display: flex;
    align-items: center;
    justify-content: center;
    cursor: pointer;
}

svg {
    display: block;
    flex-shrink: 0;
}

.defs {
    position: absolute;
}

.icon-btn {
    width: 40px;
    height: 40px;
    flex-shrink: 0;
}

/* Tabs */
.tabstrip {
    display: flex;
    align-items: center;
    height: 60px;
    padding-left: 9px;
    flex-shrink: 0;
}

.tab-search {
    width: 42px;
    height: 42px;
    border-radius: 14px;
    background-color: #fff;
    margin-right: 6px;
}

.tab {
    position: relative;
    flex: 0 1 306px;
    min-width: 0;
    height: 60px;
    display: flex;
    align-items: center;
    padding: 0 17px 0 15px;
}

.tab-name {
    flex: 1;
    min-width: 0;
    height: 40px;
    margin: 0 14px 0 12px;
    padding-top: 2px;
    justify-content: flex-start;
    white-space: nowrap;
    overflow: hidden;
    -webkit-mask-image: linear-gradient(to right, #000 85%, transparent);
    mask-image: linear-gradient(to right, #000 85%, transparent);
}

.fav {
    width: 24px;
    height: 24px;
}

.tab.with-sep::after {
    content: "";
    position: absolute;
    right: -1px;
    top: 19px;
    width: 3px;
    height: 24px;
    background-color: #fff6d6;
}

.tab.active {
    z-index: 1;
}

.tab.active > * {
    z-index: 1;
}

.tab.active::before {
    content: "";
    position: absolute;
    left: 5px;
    right: 5px;
    top: 9px;
    bottom: 0;
    border-radius: 14px 14px 0 0;
    background-color: #fff;
}

.tab.active::after {
    content: "";
    position: absolute;
    left: -9px;
    right: -9px;
    bottom: 0;
    height: 14px;
    background: radial-gradient(circle at 0 0, transparent 14px, #fff 14px) left / 14px 14px no-repeat,
        radial-gradient(circle at 100% 0, transparent 14px, #fff 14px) right / 14px 14px no-repeat;
}

.new-tab {
    width: 40px;
    height: 40px;
    margin-left: 6px;
}

.window-controls {
    display: flex;
    margin-left: auto;
}

.window-controls button {
    width: 68px;
    height: 60px;
}

/* Address bar and bookmarks */
.browser-bar {
    flex-shrink: 0;
    background-color: #fff;
    border-radius: 14px 14px 0 0;
    border-bottom: 2px solid #cfcfcf;
    padding-bottom: 11px;
}

.toolbar {
    display: flex;
    align-items: center;
    gap: 14px;
    height: 68px;
    padding: 0 13px;
}

.omnibox {
    flex: 1;
    display: flex;
    align-items: center;
    gap: 8px;
    height: 51px;
    margin: 0 6px;
    padding: 0 16px 0 7px;
    border-radius: 26px;
    background-color: #e1e1e1;
}

.file-chip {
    height: 36px;
    padding: 0 13px 0 6px;
    gap: 8px;
    border-radius: 18px;
    background-color: #fff;
    font-size: 16px;
    font-weight: 600;
}

.url {
    flex: 1;
    min-width: 0;
    margin-left: 4px;
    font-size: 20px;
}

.bar-sep {
    width: 3px;
    height: 24px;
    margin: 0 5px 0 4px;
    background-color: #FFDD5E;
}

.bookmarks {
    display: flex;
    align-items: center;
    gap: 24px;
    height: 42px;
    padding-left: 18px;
}

.bookmarks a {
    display: flex;
    align-items: center;
    gap: 9px;
    color: inherit;
    text-decoration: none;
    white-space: nowrap;
}

/* PDF toolbar */
.pdf-toolbar {
    position: relative;
    z-index: 2;
    flex-shrink: 0;
    display: grid;
    grid-template-columns: 1fr auto 1fr;
    align-items: center;
    height: 83px;
    padding: 0 28px;
    color: #f1f1f1;
    background-color: #323639;
    box-shadow: 0 2px 8px rgba(0, 0, 0, 0.4);
}

.pdf-left,
.pdf-center,
.pdf-right {
    display: flex;
    align-items: center;
}

.pdf-center {
    margin-right: 4px;
}

.pdf-left h1 {
    margin: 0 0 0 28px;
    font-family: 'Open Sans', sans-serif;
    font-size: 20px;
    font-weight: 500;
}

.pdf-right {
    justify-content: flex-end;
    gap: 14px;
}

.page-no,
.zoom-level {
    height: 30px;
    text-align: center;
    font-size: 18px;
    background-color: #191b1c;
}

.page-no {
    width: 46px;
}

.zoom-level {
    width: 66px;
    margin: 0 10px;
}

.page-count {
    margin-left: 8px;
    font-size: 18px;
}

.pdf-sep {
    width: 1px;
    height: 22px;
    margin: 0 10px 0 32px;
    background-color: #6a6d70;
}

.pdf-sep.second {
    margin: 0 22px 0 10px;
}

.rotate {
    margin-left: 8px;
}

/* Viewer */
.viewer {
    flex: 1;
    min-height: 0;
    display: flex;
}

.sidebar {
    width: 450px;
    flex-shrink: 0;
    display: flex;
    overflow: hidden;
    background-color: #323639;
}

.side-modes {
    width: 102px;
    padding-top: 18px;
    display: flex;
    flex-direction: column;
    gap: 36px;
}

.mode {
    position: relative;
    width: 102px;
    height: 54px;
}

.mode.selected::before {
    content: "";
    position: absolute;
    left: 0;
    width: 6px;
    height: 54px;
    border-radius: 0 4px 4px 0;
    background-color: #8ab4f8;
}

.thumbs {
    flex: 1;
    display: flex;
    flex-direction: column;
    align-items: center;
    padding-top: 27px;
    padding-right: 47px;
}

.thumb {
    flex-shrink: 0;
    margin: 0;
    color: #f1f1f1;
    text-align: center;
}

.thumb svg {
    width: 162px;
    border: 9px solid transparent;
    box-sizing: content-box;
    opacity: 0.5;
}

.thumb.current svg {
    border-color: #8ab4f8;
    opacity: 1;
}

.thumb figcaption {
    height: 55px;
    padding-top: 7px;
    line-height: 24px;
    font-size: 19px;
}

/* Scrollbars */
.vscroll {
    width: 25px;
    display: flex;
    flex-direction: column;
    align-items: center;
    padding: 9px 0;
    background-color: #f1f1f1;
}

.hscroll {
    display: flex;
    align-items: center;
    padding: 0 9px;
    background-color: #f1f1f1;
}

.corner {
    background-color: #dcdcdc;
}

.arrow {
    border: 6px solid transparent;
}

.arrow.up {
    border-top: none;
    border-bottom-color: #444;
}

.arrow.down {
    border-bottom: none;
    border-top-color: #444;
    margin-top: auto;
}

.arrow.left {
    border-left: none;
    border-right-color: #444;
}

.arrow.right {
    border-right: none;
    border-left-color: #444;
    margin-left: auto;
}

.handle {
    width: 21px;
    height: 25px;
    background-color: #c1c1c1;
}

.handle.side {
    margin-top: 364px;
}

.handle.main {
    margin-top: 347px;
}

.hscroll .handle {
    width: 382px;
    height: 21px;
    margin-left: 536px;
}

/* Document */
.document {
    flex: 1;
    min-width: 0;
    display: grid;
    grid-template-columns: minmax(0, 1fr) 25px;
    grid-template-rows: minmax(0, 1fr) 24px;
    background-color: #525659;
}

.canvas {
    display: flex;
    overflow: hidden;
    padding: 0 180px 0 28px;
}

.page {
    position: relative;
    flex: 1;
    min-width: 0;
    padding: 0 49px 0 30px;
    background-color: #fff;
    box-shadow: 0 0 28px 4px rgba(0, 0, 0, 0.6);
}

.sheet {
    display: grid;
    grid-template-columns: 435fr 442fr;
    gap: 57px;
    height: 100%;
    padding: 0 84px 0 140px;
    color: #2b2e31;
    background-color: #f3fcfb;
    font-family: 'Liberation Sans', Arial, sans-serif;
    font-size: 17px;
    line-height: 23px;
    white-space: nowrap;
}

.column {
    min-width: 0;
    padding-left: 26px;
}

.column.right {
    padding: 85px 0 0 34px;
}

.unit {
    margin: 0 0 19px -51px;
}

.task {
    display: flex;
    align-items: center;
    height: 23px;
    margin: 0 0 5px -26px;
    font-size: 17px;
}

.task.later {
    margin-top: 25px;
}

.task .num {
    width: 26px;
}

.task .sub {
    width: 33px;
}

.task .aim {
    width: 54px;
    height: 36px;
    margin: 0 8px 6px 0;
}

.task.wide {
    margin: 32px 0 0 -34px;
}

.task.wide .num {
    width: 34px;
}

.task.wide .aim {
    margin-right: 5px;
}

.task.wide.last {
    margin-top: 28px;
}

.task-more {
    margin: 0 0 5px;
    font-weight: 700;
}

.points {
    margin: 0;
    padding-left: 27px;
    list-style: none;
}

.points.inset {
    padding-left: 55px;
}

.points li::before {
    content: "•";
    float: left;
    margin-left: -27px;
}

.ln {
    display: block;
    text-align-last: justify;
}

.ln.tight {
    font-size: 16px;
}

h3 {
    margin: 11px 0 6px;
    font-size: 17px;
    font-style: italic;
}

.words,
.both {
    width: calc(100% - 3px);
    border-collapse: collapse;
    background-color: #fff;
}

.words {
    margin-top: 8px;
}

.words th,
.words td,
.both th,
.both td {
    border: 2px solid #2b2e31;
    padding: 0 4px;
    text-align: left;
    vertical-align: top;
}

.words th,
.both th {
    background-color: #e8e6e8;
}

.words th {
    height: 30px;
    line-height: 26px;
    text-align: center;
}

.words th:first-child {
    width: 55px;
}

.words td {
    line-height: 24px;
}

.words td:first-child {
    text-align: center;
}

.both {
    width: calc(100% - 1px);
}

.both th {
    width: 78px;
    height: 30px;
}

.answers {
    margin: 0;
    display: grid;
    grid-template-columns: 27px minmax(0, 1fr);
    font-style: italic;
}

.answers dd {
    grid-column: 2;
    margin: 0;
}

.answers .note {
    margin-top: 6px;
}

.watermark {
    position: absolute;
    left: 674px;
    top: 624px;
    transform: rotate(-56deg);
    transform-origin: 0 100%;
    font-size: 146px;
    font-weight: 800;
    font-family: 'Open Sans', sans-serif;
    line-height: 100px;
    white-space: nowrap;
    color: #a9aeae;
    mix-blend-mode: multiply;
}

.crop {
    position: absolute;
    bottom: 0;
    width: 2px;
    height: 16px;
    background-color: #333;
}

.crop-left {
    left: 22px;
}

.crop-right {
    right: 24px;
}

/* Taskbar */
.taskbar {
    flex-shrink: 0;
    display: grid;
    grid-template-columns: 1fr auto 1fr;
    align-items: center;
    height: 72px;
    padding: 0 31px 2px 28px;
    border-top: 2px solid #3d4454;
    color: #fff;
    background: linear-gradient(to right, #1c212c 0, #1c2234 15%, #14215a 26%, #14215a 50%, #1e2138 60%, #15224c 67%, #1d222d 77%);
}

.weather {
    justify-self: start;
    gap: 10px;
    text-align: left;
    line-height: 24px;
}

.weather small {
    display: block;
    font-size: 17px;
    color: #c5c8d0;
}

.apps {
    display: flex;
    align-items: center;
    gap: 6px;
}

.app {
    position: relative;
    width: 60px;
    height: 60px;
    border-radius: 8px;
}

.search {
    display: flex;
    align-items: center;
    gap: 14px;
    width: 332px;
    height: 48px;
    padding: 0 4px 0 17px;
    border-radius: 24px;
    background-color: #36406e;
    border: 1px solid #535c86;
    border-top: 2px solid #646d95;
}

.search input {
    flex: 1;
    min-width: 0;
    font-size: 19px;
}

.search input::placeholder {
    color: #cfd1de;
    opacity: 1;
}

.running {
    background-color: #242e57;
    border: 1px solid #333d66;
}

.running::after,
.opened::after {
    content: "";
    position: absolute;
    bottom: 0;
    left: 50%;
    width: 24px;
    height: 5px;
    margin-left: -12px;
    border-radius: 3px;
    background-color: #4cc2ff;
}

.opened::after {
    width: 8px;
    margin-left: -4px;
    background-color: #9a9fb0;
}

.badge {
    position: absolute;
    right: 3px;
    top: 4px;
}

.tray {
    justify-self: end;
    display: flex;
    align-items: center;
}

.lang {
    margin: 0 15px 0 30px;
}

.status {
    gap: 10px;
    padding: 0 12px;
}

.clock {
    display: block;
    margin: 0 12px 0 10px;
    text-align: right;
    line-height: 24px;
}

.copilot {
    margin-left: 25px;
}
```
